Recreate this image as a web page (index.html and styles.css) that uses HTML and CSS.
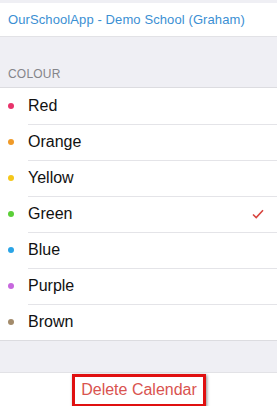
FILE: index.html
```html
<!DOCTYPE html>
<html lang="en">
<head>
    <meta charset="UTF-8">
    <meta name="viewport" content="width=device-width, initial-scale=1.0">
    <title>Calendar Colour</title>
    <link rel="stylesheet" href="styles.css">
</head>
<body>
    <div class="top-gap"></div>
    <div class="calendar-name">OurSchoolApp - Demo School (Graham)</div>
    <div class="section-head">COLOUR</div>
    <ul class="colour-list">
        <li><span class="dot red"></span>Red</li>
        <li><span class="dot orange"></span>Orange</li>
        <li><span class="dot yellow"></span>Yellow</li>
        <li><span class="dot green"></span>Green
            <svg class="check" width="12" height="10" viewBox="0 0 12 10">
                <path d="M1 5.5 L4.2 8.5 L11 1.2" fill="none" stroke="#d8453f" stroke-width="1.6"/>
            </svg>
        </li>
        <li><span class="dot blue"></span>Blue</li>
        <li><span class="dot purple"></span>Purple</li>
        <li><span class="dot brown"></span>Brown</li>
    </ul>
    <div class="spacer"></div>
    <div class="delete-row">
        <span class="delete-btn">Delete Calendar</span>
    </div>
</body>
</html>
```

FILE: styles.css
```css
body {
    margin: 0;
    background: #efeff4;
    font-family: "Liberation Sans", Arial, sans-serif;
    width: 277px;
    height: 406px;
    overflow: hidden;
}
.top-gap {
    height: 3px;
}
.calendar-name {
    background: white;
    height: 33px;
    line-height: 33px;
    padding-left: 8px;
    font-size: 13px;
    letter-spacing: 0.1px;
    color: #3b8fd3;
    border-bottom: 1px solid #e2e2e6;
}
.section-head {
    height: 50px;
    box-sizing: border-box;
    padding: 30px 0 0 8px;
    font-size: 12px;
    color: #85858a;
    letter-spacing: 0.2px;
}
.colour-list {
    list-style: none;
    margin: 0;
    padding: 0;
    background: white;
    border-top: 1px solid #dcdce0;
    border-bottom: 1px solid #dcdce0;
}
.colour-list li {
    position: relative;
    height: 36px;
    display: flex;
    align-items: center;
    font-size: 16px;
    color: #111;
}
.colour-list li + li::before {
    content: "";
    position: absolute;
    top: 0;
    left: 28px;
    right: 0;
    border-top: 1px solid #e4e4e8;
}
.dot {
    width: 6px;
    height: 6px;
    border-radius: 50%;
    margin: 0 14px 0 8px;
}
.red { background: #e8336b; }
.orange { background: #f09a28; }
.yellow { background: #f5c71a; }
.green { background: #5bcf38; }
.blue { background: #2aa4e6; }
.purple { background: #c768de; }
.brown { background: #a38b6b; }
.check {
    margin-left: auto;
    margin-right: 13px;
}
.spacer {
    height: 31px;
}
.delete-row {
    background: white;
    height: 36px;
    display: flex;
    justify-content: center;
    align-items: flex-start;
    border-top: 1px solid #e2e2e6;
}
.delete-btn {
    margin-top: 1px;
    margin-left: 1px;
    padding: 4px 6px 5px 6px;
    border: 3px solid #e01010;
    box-shadow: 1px 1px 3px rgba(0, 0, 0, 0.45);
    font-size: 16px;
    color: #d9534f;
}
```
